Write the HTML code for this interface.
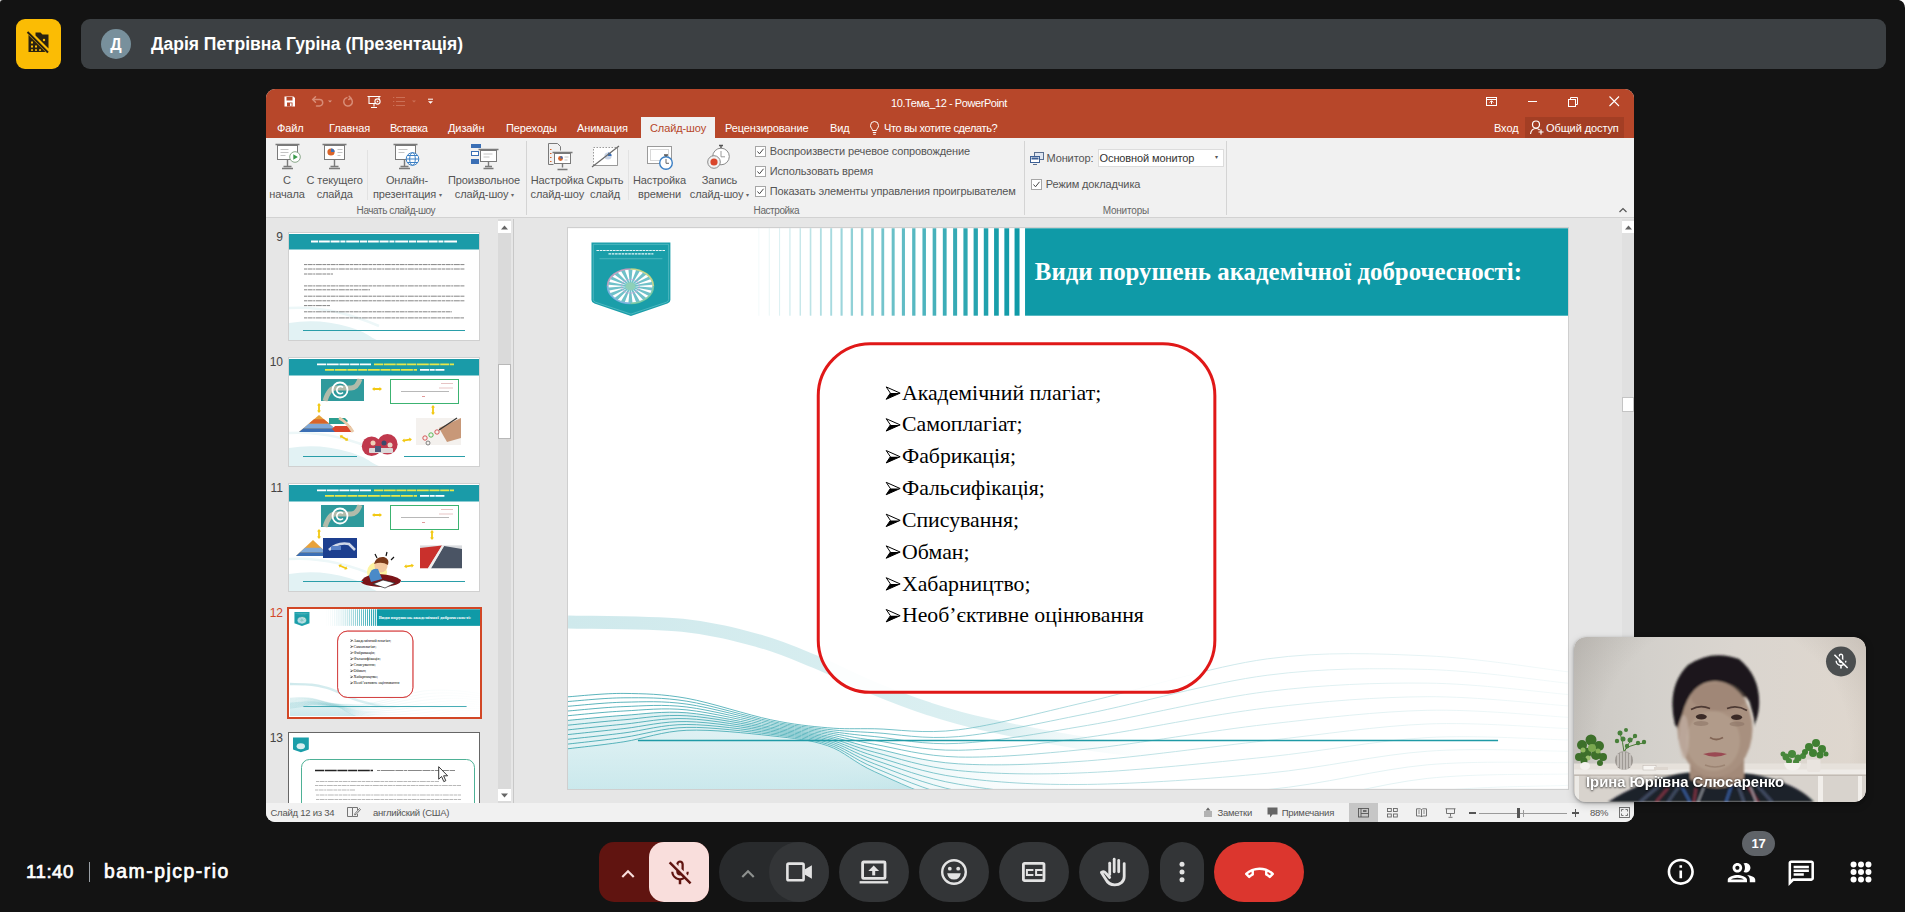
<!DOCTYPE html>
<html>
<head>
<meta charset="utf-8">
<title>Meet</title>
<style>
*{box-sizing:border-box;margin:0;padding:0}
html,body{width:1905px;height:912px;overflow:hidden;background:#131313;font-family:"Liberation Sans",sans-serif;}
body{position:relative}
.abs{position:absolute}
/* ---------- top bar ---------- */
#fx{left:16px;top:19px;width:45px;height:50px;border-radius:9px;background:#fbbc04}
#pbar{left:81px;top:19px;width:1805px;height:50px;border-radius:9px;background:#3c4043}
#av{left:101px;top:29px;width:30px;height:30px;border-radius:50%;background:#78909c;color:#fff;font-size:16px;font-weight:bold;text-align:center;line-height:31px}
#pname{left:151px;top:32px;color:#fff;font-size:17.5px;font-weight:bold;letter-spacing:0px;white-space:nowrap;line-height:24px}
/* ---------- ppt window ---------- */
#ppt{left:266px;top:89px;width:1368px;height:733px;border-radius:9px;background:#e6e6e6;overflow:hidden}
#ptitle{left:0;top:0;width:1368px;height:49px;background:#b7472a}
#ribbon{left:0;top:49px;width:1368px;height:80px;background:#f1f1f1;border-bottom:1px solid #d2d2d2}
#status{left:0;top:714px;width:1368px;height:19px;background:#f1f1f1}
.t{position:absolute;white-space:nowrap;line-height:1}

/* ribbon text */
.tab{position:absolute;top:33px;color:#fff;font-size:11px;line-height:12px;white-space:nowrap;letter-spacing:-0.1px}
.rl{position:absolute;color:#555;font-size:11px;line-height:13px;white-space:nowrap;text-align:center;letter-spacing:-0.12px;transform:translateX(-50%)}
.rx{position:absolute;color:#555;font-size:11px;line-height:13px;white-space:nowrap;letter-spacing:-0.12px}
.gl{position:absolute;top:116px;color:#666;font-size:10px;line-height:12px;white-space:nowrap;letter-spacing:-0.42px}
.vsep{position:absolute;top:3px;width:1px;height:74px;background:#d4d4d4}
.vsep2{position:absolute;top:12px;width:1px;height:50px;background:#e2e2e2}
.cb{position:absolute;width:11px;height:11px;border:1px solid #a6a6a6;background:#fff}
.cb svg{position:absolute;left:0;top:0}
.ric{position:absolute;top:3px;width:32px;height:32px}
/* ---------- bottom bar ---------- */
.btn{position:absolute;top:842px;height:60px;background:#333537;border-radius:30px}
</style>
</head>
<body>
<!-- TOPBAR -->
<svg class="abs" style="left:1899px;top:0" width="6" height="8" viewBox="0 0 6 8"><path d="M0 0H6V8Q5.500 1 0 0Z" fill="#fff"/></svg><svg class="abs" style="left:0;top:0" width="4" height="4" viewBox="0 0 4 4"><path d="M0 0H3Q0 0 0 3Z" fill="#ddd"/></svg>
<div class="abs" id="fx"></div>
<div class="abs" id="pbar"></div>
<div class="abs" id="av">Д</div>
<div class="abs" id="pname">Дарія Петрівна Гуріна (Презентація)</div>


<svg width="0" height="0" style="position:absolute">
 <defs>
  <linearGradient id="gfill" gradientUnits="userSpaceOnUse" x1="0" y1="505" x2="0" y2="561"><stop offset="0" stop-color="#f3fafb"/><stop offset="0.35" stop-color="#def1f3"/><stop offset="1" stop-color="#b3dee4"/></linearGradient><linearGradient id="gfill2" gradientUnits="userSpaceOnUse" x1="250" y1="0" x2="520" y2="0"><stop offset="0" stop-color="#d5edf0" stop-opacity="0.7"/><stop offset="1" stop-color="#e6f4f6" stop-opacity="0"/></linearGradient>
  <linearGradient id="gfade" x1="0" y1="0" x2="1" y2="0"><stop offset="0" stop-color="#fff" stop-opacity="0"/><stop offset="0.55" stop-color="#fff" stop-opacity="0.15"/><stop offset="1" stop-color="#fff" stop-opacity="1"/></linearGradient>
  <linearGradient id="glines" gradientUnits="userSpaceOnUse" x1="0" y1="0" x2="1001" y2="0"><stop offset="0" stop-color="#2f9fa9"/><stop offset="0.3" stop-color="#48adb6"/><stop offset="0.5" stop-color="#9dd3d8"/><stop offset="0.75" stop-color="#d6ecee"/><stop offset="1" stop-color="#f0f8f9"/></linearGradient>
  <linearGradient id="grib" gradientUnits="userSpaceOnUse" x1="0" y1="0" x2="620" y2="0"><stop offset="0" stop-color="#cfe9ec"/><stop offset="0.7" stop-color="#dcf0f2"/><stop offset="1" stop-color="#fff" stop-opacity="0"/></linearGradient>
  <symbol id="slide12" viewBox="0 0 1001 561">
   <rect width="1001" height="561" fill="#fff"/>
   <!-- bottom fill -->
   <path d="M0.0 521.0C9.3 519.8 36.2 517.1 56.0 514.0C75.8 510.9 94.5 503.5 119.0 502.5C143.5 501.5 179.5 505.4 203.0 508.0C226.5 510.6 242.7 512.0 260.0 518.0C277.3 524.0 285.2 534.2 307.0 544.0C328.8 553.8 355.5 567.0 391.0 577.0C426.5 587.0 498.5 599.5 520.0 604.0L520 640L0 640Z" fill="url(#gfill)"/><path d="M0.0 492.4C9.3 491.6 36.2 488.6 56.0 487.4C75.8 486.1 94.5 482.9 119.0 484.9C143.5 486.9 179.5 495.3 203.0 499.2C226.5 503.1 242.7 504.6 260.0 508.1C277.3 511.6 285.2 515.7 307.0 520.4C328.8 525.0 355.5 533.7 391.0 535.8C426.5 537.8 498.5 533.0 520.0 532.5L520 640L0 640Z" fill="url(#gfill2)"/>
   
   <!-- wide light ribbon -->
   <path d="M0.0 394.0C19.1 394.6 82.7 394.2 114.5 397.4C146.3 400.6 168.8 406.9 191.0 413.0C213.2 419.1 228.7 426.2 247.6 434.0C266.5 441.8 285.4 451.9 304.3 459.7C323.2 467.5 342.1 474.9 361.0 481.0C379.9 487.1 391.2 490.8 417.7 496.6C444.2 502.4 486.3 510.8 520.0 516.0C553.7 521.2 603.3 526.0 620.0 528.0" fill="none" stroke="url(#grib)" stroke-width="13"/>
   <g fill="none" stroke="url(#glines)" stroke-width="0.800"><path d="M0.0 469.0C9.3 468.4 36.2 465.4 56.0 465.6C75.8 465.9 94.5 466.1 119.0 470.5C143.5 474.9 179.5 487.1 203.0 492.0C226.5 496.9 242.7 498.5 260.0 500.0C277.3 501.5 285.2 500.7 307.0 501.0C328.8 501.3 355.5 506.5 391.0 502.0C426.5 497.5 468.5 485.8 520.0 474.0C571.5 462.2 643.3 438.7 700.0 431.0C756.7 423.3 809.8 425.8 860.0 428.0C910.2 430.2 977.5 441.3 1001.0 444.0"/><path d="M0.0 473.7C9.3 473.1 36.2 470.1 56.0 470.0C75.8 469.9 94.5 469.5 119.0 473.4C143.5 477.3 179.5 488.8 203.0 493.5C226.5 498.2 242.7 499.7 260.0 501.6C277.3 503.5 285.2 503.7 307.0 504.9C328.8 506.1 355.5 512.0 391.0 508.8C426.5 505.6 468.5 496.1 520.0 485.8C571.5 475.6 643.3 454.7 700.0 447.4C756.7 440.0 809.8 440.3 860.0 441.6C910.2 443.0 977.5 453.1 1001.0 455.4"/><path d="M0.0 478.5C9.3 477.8 36.2 474.8 56.0 474.4C75.8 474.0 94.5 472.9 119.0 476.3C143.5 479.7 179.5 490.4 203.0 494.9C226.5 499.4 242.7 501.0 260.0 503.3C277.3 505.6 285.2 506.8 307.0 508.8C328.8 510.9 355.5 517.5 391.0 515.6C426.5 513.8 468.5 506.3 520.0 497.6C571.5 489.0 643.3 470.8 700.0 463.7C756.7 456.7 809.8 454.8 860.0 455.3C910.2 455.8 977.5 464.8 1001.0 466.7"/><path d="M0.0 483.2C9.3 482.5 36.2 479.5 56.0 478.8C75.8 478.1 94.5 476.3 119.0 479.2C143.5 482.2 179.5 492.1 203.0 496.4C226.5 500.6 242.7 502.2 260.0 504.9C277.3 507.6 285.2 509.8 307.0 512.7C328.8 515.7 355.5 523.0 391.0 522.5C426.5 521.9 468.5 516.5 520.0 509.5C571.5 502.4 643.3 486.8 700.0 480.1C756.7 473.3 809.8 469.2 860.0 468.9C910.2 468.6 977.5 476.6 1001.0 478.1"/><path d="M0.0 487.9C9.3 487.1 36.2 484.2 56.0 483.2C75.8 482.2 94.5 479.7 119.0 482.1C143.5 484.6 179.5 493.8 203.0 497.8C226.5 501.9 242.7 503.4 260.0 506.5C277.3 509.7 285.2 512.8 307.0 516.6C328.8 520.4 355.5 528.5 391.0 529.3C426.5 530.0 468.5 526.7 520.0 521.3C571.5 515.8 643.3 502.9 700.0 496.5C756.7 490.0 809.8 483.7 860.0 482.5C910.2 481.4 977.5 488.3 1001.0 489.5"/><path d="M0.0 492.6C9.3 491.8 36.2 488.9 56.0 487.6C75.8 486.3 94.5 483.1 119.0 485.0C143.5 487.0 179.5 495.4 203.0 499.3C226.5 503.1 242.7 504.6 260.0 508.2C277.3 511.7 285.2 515.9 307.0 520.5C328.8 525.2 355.5 534.0 391.0 536.1C426.5 538.2 468.5 537.0 520.0 533.1C571.5 529.2 643.3 519.0 700.0 512.8C756.7 506.7 809.8 498.2 860.0 496.2C910.2 494.2 977.5 500.0 1001.0 500.8"/><path d="M0.0 497.4C9.3 496.5 36.2 493.6 56.0 492.0C75.8 490.4 94.5 486.5 119.0 488.0C143.5 489.4 179.5 497.1 203.0 500.7C226.5 504.4 242.7 505.9 260.0 509.8C277.3 513.8 285.2 518.9 307.0 524.5C328.8 530.0 355.5 539.5 391.0 542.9C426.5 546.3 468.5 547.2 520.0 544.9C571.5 542.6 643.3 535.0 700.0 529.2C756.7 523.3 809.8 512.7 860.0 509.8C910.2 507.0 977.5 511.8 1001.0 512.2"/><path d="M0.0 502.1C9.3 501.1 36.2 498.3 56.0 496.4C75.8 494.5 94.5 489.9 119.0 490.9C143.5 491.8 179.5 498.8 203.0 502.2C226.5 505.6 242.7 507.1 260.0 511.5C277.3 515.8 285.2 522.0 307.0 528.4C328.8 534.7 355.5 545.0 391.0 549.7C426.5 554.5 468.5 557.4 520.0 556.7C571.5 556.0 643.3 551.1 700.0 545.5C756.7 540.0 809.8 527.1 860.0 523.5C910.2 519.8 977.5 523.5 1001.0 523.5"/><path d="M0.0 506.8C9.3 505.8 36.2 503.0 56.0 500.8C75.8 498.6 94.5 493.3 119.0 493.8C143.5 494.2 179.5 500.4 203.0 503.6C226.5 506.9 242.7 508.3 260.0 513.1C277.3 517.9 285.2 525.0 307.0 532.3C328.8 539.5 355.5 550.5 391.0 556.5C426.5 562.6 468.5 567.7 520.0 568.5C571.5 569.4 643.3 567.2 700.0 561.9C756.7 556.7 809.8 541.6 860.0 537.1C910.2 532.6 977.5 535.3 1001.0 534.9"/><path d="M0.0 511.5C9.3 510.5 36.2 507.7 56.0 505.2C75.8 502.7 94.5 496.7 119.0 496.7C143.5 496.7 179.5 502.1 203.0 505.1C226.5 508.1 242.7 509.5 260.0 514.7C277.3 519.9 285.2 528.1 307.0 536.2C328.8 544.3 355.5 556.0 391.0 563.4C426.5 570.7 468.5 577.9 520.0 580.4C571.5 582.8 643.3 583.2 700.0 578.3C756.7 573.3 809.8 556.1 860.0 550.7C910.2 545.4 977.5 547.0 1001.0 546.3"/><path d="M0.0 516.3C9.3 515.2 36.2 512.4 56.0 509.6C75.8 506.8 94.5 500.1 119.0 499.6C143.5 499.1 179.5 503.8 203.0 506.5C226.5 509.3 242.7 510.8 260.0 516.4C277.3 522.0 285.2 531.1 307.0 540.1C328.8 549.1 355.5 561.5 391.0 570.2C426.5 578.9 468.5 588.1 520.0 592.2C571.5 596.3 643.3 599.3 700.0 594.6C756.7 590.0 809.8 570.5 860.0 564.4C910.2 558.2 977.5 558.8 1001.0 557.6"/><path d="M0.0 521.0C9.3 519.8 36.2 517.1 56.0 514.0C75.8 510.9 94.5 503.5 119.0 502.5C143.5 501.5 179.5 505.4 203.0 508.0C226.5 510.6 242.7 512.0 260.0 518.0C277.3 524.0 285.2 534.2 307.0 544.0C328.8 553.8 355.5 567.0 391.0 577.0C426.5 587.0 468.5 598.3 520.0 604.0C571.5 609.7 643.3 615.3 700.0 611.0C756.7 606.7 809.8 585.0 860.0 578.0C910.2 571.0 977.5 570.5 1001.0 569.0"/></g>
   <path d="M70 512.700H931" stroke="#1f9aa6" stroke-width="1.400"/>
   <!-- header -->
   <rect x="447.0" y="0" width="5.0" height="87.500" fill="#0f9aa7" opacity="1.00"/><rect x="436.8" y="0" width="4.8" height="87.500" fill="#0f9aa7" opacity="0.98"/><rect x="426.5" y="0" width="4.7" height="87.500" fill="#0f9aa7" opacity="0.96"/><rect x="416.2" y="0" width="4.5" height="87.500" fill="#0f9aa7" opacity="0.93"/><rect x="406.0" y="0" width="4.3" height="87.500" fill="#0f9aa7" opacity="0.90"/><rect x="395.8" y="0" width="4.2" height="87.500" fill="#0f9aa7" opacity="0.87"/><rect x="385.5" y="0" width="4.0" height="87.500" fill="#0f9aa7" opacity="0.84"/><rect x="375.2" y="0" width="3.8" height="87.500" fill="#0f9aa7" opacity="0.81"/><rect x="365.0" y="0" width="3.6" height="87.500" fill="#0f9aa7" opacity="0.77"/><rect x="354.8" y="0" width="3.5" height="87.500" fill="#0f9aa7" opacity="0.74"/><rect x="344.5" y="0" width="3.3" height="87.500" fill="#0f9aa7" opacity="0.70"/><rect x="334.2" y="0" width="3.1" height="87.500" fill="#0f9aa7" opacity="0.66"/><rect x="324.0" y="0" width="3.0" height="87.500" fill="#0f9aa7" opacity="0.62"/><rect x="313.7" y="0" width="2.8" height="87.500" fill="#0f9aa7" opacity="0.58"/><rect x="303.5" y="0" width="2.6" height="87.500" fill="#0f9aa7" opacity="0.54"/><rect x="293.2" y="0" width="2.4" height="87.500" fill="#0f9aa7" opacity="0.50"/><rect x="283.0" y="0" width="2.3" height="87.500" fill="#0f9aa7" opacity="0.46"/><rect x="272.8" y="0" width="2.1" height="87.500" fill="#0f9aa7" opacity="0.41"/><rect x="262.5" y="0" width="1.9" height="87.500" fill="#0f9aa7" opacity="0.37"/><rect x="252.2" y="0" width="1.8" height="87.500" fill="#0f9aa7" opacity="0.33"/><rect x="242.0" y="0" width="1.6" height="87.500" fill="#0f9aa7" opacity="0.28"/><rect x="231.8" y="0" width="1.4" height="87.500" fill="#0f9aa7" opacity="0.24"/><rect x="221.5" y="0" width="1.3" height="87.500" fill="#0f9aa7" opacity="0.19"/><rect x="211.2" y="0" width="1.1" height="87.500" fill="#0f9aa7" opacity="0.14"/><rect x="201.0" y="0" width="0.9" height="87.500" fill="#0f9aa7" opacity="0.10"/><rect x="190.6" y="0" width="0.9" height="87.500" fill="#0f9aa7" opacity="0.06"/>
   <rect x="457.500" y="0" width="543.500" height="87.500" fill="#0f9aa7"/>
   <text x="467.300" y="51.500" font-family="Liberation Serif" font-weight="bold" font-size="24.900" fill="#fff">Види порушень академічної доброчесності:</text>
   <!-- logo -->
   <g transform="translate(23.500 14.300)">
     <path d="M0 0H79V57.500Q79 60 76 61L39.500 73.500 3 61Q0 60 0 57.500Z" fill="#1a9ea9"/>
     <path d="M1.800 1.800H77.200V57Q77.200 59 75 59.700L39.500 71.600 4 59.700Q1.800 59 1.800 57Z" fill="none" stroke="#6cc6cd" stroke-width="0.600"/>
     <path d="M5 8H74" stroke="#e8f6f7" stroke-width="1.100" stroke-dasharray="2.600 0.700"/><path d="M17 11.300H62" stroke="#e8f6f7" stroke-width="1.100" stroke-dasharray="2.600 0.700"/>
     <path d="M8 16.200H71" stroke="#7fcfd5" stroke-width="0.500"/>
     <ellipse cx="39" cy="43.700" rx="23" ry="17.300" fill="#b7dfe3" opacity="0.550"/>
     <g transform="translate(-23.500 -14.300)"><path d="M66.5 58.0L84.4 56.6L84.4 59.4ZM66.3 59.0L83.7 62.3L82.5 64.9ZM65.6 59.9L80.5 67.5L78.1 69.6ZM64.5 60.6L75.1 71.5L71.8 72.9ZM63.2 61.0L68.1 73.9L64.5 74.4ZM61.8 61.0L60.5 74.4L56.9 73.9ZM60.5 60.6L53.2 72.9L49.9 71.5ZM59.4 59.9L46.9 69.6L44.5 67.5ZM58.7 59.0L42.5 64.9L41.3 62.3ZM58.5 58.0L40.6 59.4L40.6 56.6ZM58.7 57.0L41.3 53.7L42.5 51.1ZM59.4 56.1L44.5 48.5L46.9 46.4ZM60.5 55.4L49.9 44.5L53.2 43.1ZM61.8 55.0L56.9 42.1L60.5 41.6ZM63.2 55.0L64.5 41.6L68.1 42.1ZM64.5 55.4L71.8 43.1L75.1 44.5ZM65.6 56.1L78.1 46.4L80.5 48.5ZM66.3 57.0L82.5 51.1L83.7 53.7Z" fill="#fff"/></g>
     <ellipse cx="39" cy="43.700" rx="5" ry="4" fill="#8ed0b8"/>
     <g fill="none" stroke-width="1.600" opacity="0.750"><path d="M16 43.700A23 17.300 0 0 1 39 26.400" stroke="#e79ac0"/><path d="M39 26.400A23 17.300 0 0 1 62 43.700" stroke="#f0e27a"/><path d="M62 43.700A23 17.300 0 0 1 39 61" stroke="#8fd4a0"/><path d="M39 61A23 17.300 0 0 1 16 43.700" stroke="#8fb4ec"/></g><ellipse cx="39" cy="43.700" rx="9" ry="7" fill="none" stroke="#c9a0d8" stroke-width="1.200" opacity="0.500"/>
   </g>
   <!-- red box -->
   <rect x="250.500" y="115.500" width="397" height="349" rx="52" ry="52" fill="#fff" fill-opacity="0.920" stroke="#e01818" stroke-width="3"/>
   <g font-family="Liberation Serif" font-size="21.800" fill="#000"><g transform="translate(318.500 158.8)"><path d="M0 0L14 6.200 0 12.400 4.200 6.200Z" fill="#fff" stroke="#000" stroke-width="1" stroke-linejoin="miter"/><path d="M4.200 6.200H14L0 12.400Z" fill="#000"/></g><text x="334.300" y="171.6">Академічний плагіат;</text><g transform="translate(318.500 190.6)"><path d="M0 0L14 6.200 0 12.400 4.200 6.200Z" fill="#fff" stroke="#000" stroke-width="1" stroke-linejoin="miter"/><path d="M4.200 6.200H14L0 12.400Z" fill="#000"/></g><text x="334.300" y="203.4">Самоплагіат;</text><g transform="translate(318.500 222.5)"><path d="M0 0L14 6.200 0 12.400 4.200 6.200Z" fill="#fff" stroke="#000" stroke-width="1" stroke-linejoin="miter"/><path d="M4.200 6.200H14L0 12.400Z" fill="#000"/></g><text x="334.300" y="235.3">Фабрикація;</text><g transform="translate(318.500 254.3)"><path d="M0 0L14 6.200 0 12.400 4.200 6.200Z" fill="#fff" stroke="#000" stroke-width="1" stroke-linejoin="miter"/><path d="M4.200 6.200H14L0 12.400Z" fill="#000"/></g><text x="334.300" y="267.1">Фальсифікація;</text><g transform="translate(318.500 286.2)"><path d="M0 0L14 6.200 0 12.400 4.200 6.200Z" fill="#fff" stroke="#000" stroke-width="1" stroke-linejoin="miter"/><path d="M4.200 6.200H14L0 12.400Z" fill="#000"/></g><text x="334.300" y="299">Списування;</text><g transform="translate(318.500 317.9)"><path d="M0 0L14 6.200 0 12.400 4.200 6.200Z" fill="#fff" stroke="#000" stroke-width="1" stroke-linejoin="miter"/><path d="M4.200 6.200H14L0 12.400Z" fill="#000"/></g><text x="334.300" y="330.7">Обман;</text><g transform="translate(318.500 349.8)"><path d="M0 0L14 6.200 0 12.400 4.200 6.200Z" fill="#fff" stroke="#000" stroke-width="1" stroke-linejoin="miter"/><path d="M4.200 6.200H14L0 12.400Z" fill="#000"/></g><text x="334.300" y="362.6">Хабарництво;</text><g transform="translate(318.500 381.6)"><path d="M0 0L14 6.200 0 12.400 4.200 6.200Z" fill="#fff" stroke="#000" stroke-width="1" stroke-linejoin="miter"/><path d="M4.200 6.200H14L0 12.400Z" fill="#000"/></g><text x="334.300" y="394.4">Необ’єктивне оцінювання</text></g>
  </symbol>
 </defs>
</svg>

<!-- PPT -->
<div class="abs" id="ppt">
  <div class="abs" id="ptitle">
    <!-- quick access -->
    <svg class="abs" style="left:14px;top:4px" width="160" height="18" viewBox="0 0 160 18">
      <g fill="none" stroke="#fff" stroke-width="1.2">
        <path d="M4.5 3.5h9l1.5 1.5v8.5h-10.5z" fill="#fff" stroke="none"/>
        <rect x="6.5" y="4" width="6" height="3.5" fill="#b7472a" stroke="none"/>
        <rect x="7" y="9.5" width="5.5" height="4" fill="#b7472a" stroke="none"/>
        <rect x="10" y="10.3" width="1.6" height="2.6" fill="#fff" stroke="none"/>
      </g>
      <g fill="none" stroke="#d88c76" stroke-width="1.5" stroke-linecap="round">
        <path d="M33 6.5h6.5a3.2 3.2 0 0 1 0 6.4h-3"/><path d="M35.5 3.8l-2.7 2.7 2.7 2.7"/>
        <path d="M70.5 5.2a4.3 4.3 0 1 1-3.6-0.6"/><path d="M69.2 3.2l1.8 2-2.3 1.3" />
      </g>
      <path d="M48 7.5h4l-2 2z" fill="#d99a88"/>
      <g fill="none" stroke="#fff" stroke-width="1.1">
        <path d="M87.5 3.5h13M89 3.5v7h10v-7M94 10.5v3M91 14.5h6"/>
        <circle cx="97.5" cy="8.5" r="2.6" fill="#b7472a"/><path d="M96.8 7.2l1.8 1.3-1.8 1.3z" fill="#fff" stroke="none"/>
      </g>
      <g stroke="#cb6f56" stroke-width="1.2">
        <path d="M116 4.5h9M116 8.5h9M116 12.5h9"/>
        <path d="M113 4.5h1.3M113 8.5h1.3M113 12.5h1.3"/>
      </g>
      <path d="M132 7.5h4l-2 2z" fill="#cb6f56"/>
      <path d="M148 6.2h5" stroke="#fff" stroke-width="1"/><path d="M148 8.2h5l-2.5 2.6z" fill="#fff"/>
    </svg>
    <div class="t" style="left:625px;top:8px;color:#fff;font-size:11px;letter-spacing:-0.42px;line-height:12px">10.Тема_12 - PowerPoint</div>
    <!-- window controls -->
    <svg class="abs" style="left:1215px;top:4px" width="150" height="18" viewBox="0 0 150 18" fill="none" stroke="#fff" stroke-width="1">
      <rect x="5.5" y="4.5" width="10" height="8"/><path d="M5.5 6.5h10M10.5 11V8M8.7 9.5l1.8-1.8 1.8 1.8"/>
      <path d="M47 8.5h9"/>
      <rect x="87.500" y="6.500" width="7" height="7"/><path d="M89.500 6.500v-2h7v7h-2"/>
      <path d="M128.5 3.500l9.500 9.500M138 3.500l-9.500 9.500" stroke-width="1.100"/>
    </svg>
    <!-- tabs -->
    <div class="tab" style="left:11px">Файл</div>
    <div class="tab" style="left:63px">Главная</div>
    <div class="tab" style="left:124px;letter-spacing:-0.5px">Вставка</div>
    <div class="tab" style="left:182px">Дизайн</div>
    <div class="tab" style="left:240px">Переходы</div>
    <div class="tab" style="left:311px">Анимация</div>
    <div class="abs" style="left:375px;top:28px;width:74px;height:22px;background:#f1f1f1"></div>
    <div class="tab" style="left:384px;color:#b7472a">Слайд-шоу</div>
    <div class="tab" style="left:459px">Рецензирование</div>
    <div class="tab" style="left:564px">Вид</div>
    <svg class="abs" style="left:603px;top:31px" width="11" height="16" viewBox="0 0 11 16" fill="none" stroke="#fff" stroke-width="1"><path d="M3.500 10.500c0-1.800-2-2.500-2-5a4 4 0 0 1 8 0c0 2.500-2 3.200-2 5zM3.800 12.500h3.400M4.200 14.300h2.600"/></svg>
    <div class="tab" style="left:618px;letter-spacing:-0.38px">Что вы хотите сделать?</div>
    <div class="tab" style="left:1228px">Вход</div>
    <div class="abs" style="left:1259px;top:28px;width:99px;height:21px;background:#a33e24"></div>
    <svg class="abs" style="left:1263px;top:30px" width="16" height="17" viewBox="0 0 16 17" fill="none" stroke="#fff" stroke-width="1.200"><circle cx="7" cy="5.500" r="3.500"/><path d="M1.500 15c0.500-3.500 2.500-5.500 5.500-5.500 1.500 0 2.800 0.600 3.600 1.500"/><path d="M12 10.500v5M9.500 13h5"/></svg>
    <div class="tab" style="left:1280px">Общий доступ</div>
  </div>
  <div class="abs" id="ribbon">
    <svg class="ric" style="left:5.5px" viewBox="0 0 32 32" fill="none" stroke="#7a7a7a" stroke-width="1"><path d="M3.500 3.500h24" stroke-width="1.400"/><rect x="5.500" y="4.500" width="20" height="14" fill="#fff"/><path d="M8.500 8.500h8M8.500 11.500h8M8.500 14.500h5" stroke="#c4c4c4"/><path d="M15.500 18.500v7M10 27.500h11M11.500 25.500h8" stroke-width="1.400"/><circle cx="23" cy="16" r="5.300" fill="#fff" stroke="#8aa88a"/><path d="M21.300 13.200l4.500 2.800-4.500 2.800z" fill="#3a9a4a" stroke="none"/></svg>
    <div class="rl" style="left:21px;top:36px">С</div>
    <div class="rl" style="left:21px;top:50px">начала</div>
    <svg class="ric" style="left:52.7px" viewBox="0 0 32 32" fill="none" stroke="#7a7a7a" stroke-width="1"><path d="M3.500 3.500h24" stroke-width="1.400"/><rect x="5.500" y="4.500" width="20" height="14" fill="#fff"/><circle cx="12" cy="11" r="3.600" fill="#d9642a" stroke="none"/><path d="M12 11V7.400a3.600 3.600 0 0 1 3.600 3.600z" fill="#3b6fb5" stroke="none"/><path d="M18.500 8.500h5M18.500 11.500h5M18.500 14.500h3" stroke="#c4c4c4"/><path d="M15.500 18.500v7M10 27.500h11M11.500 25.500h8" stroke-width="1.400"/></svg>
    <div class="rl" style="left:68.7px;top:36px">С текущего</div>
    <div class="rl" style="left:68.7px;top:50px">слайда</div>
    <div class="vsep2" style="left:101px"></div>
    <svg class="ric" style="left:124px" viewBox="0 0 32 32" fill="none" stroke="#7a7a7a" stroke-width="1"><path d="M3.500 3.500h24" stroke-width="1.400"/><rect x="5.500" y="4.500" width="20" height="14" fill="#fff"/><path d="M8.500 8.500h9M8.500 11.500h6" stroke="#c4c4c4"/><path d="M14.500 18.500v7M9 27.500h11M10.500 25.500h8" stroke-width="1.400"/><circle cx="22.500" cy="18" r="6.300" fill="#fff" stroke="#3b7fc4"/><ellipse cx="22.500" cy="18" rx="2.800" ry="6.300" stroke="#3b7fc4"/><path d="M16.300 18h12.400M17.200 14.500h10.600M17.200 21.500h10.600" stroke="#3b7fc4"/></svg>
    <div class="rl" style="left:141px;top:36px">Онлайн-</div>
    <div class="rl" style="left:141.5px;top:50px">презентация <span style="font-size:6px;position:relative;top:-1px;color:#666">&#9662;</span></div>
    <svg class="ric" style="left:202px" viewBox="0 0 32 32" fill="none" stroke="#7a7a7a" stroke-width="1"><rect x="3.500" y="3.500" width="9" height="3" fill="#3b6fb5" stroke="#3b6fb5"/><rect x="3.500" y="10.500" width="7" height="4" fill="#fff" stroke="#3b6fb5"/><rect x="3.500" y="18.500" width="7" height="4" fill="#3b6fb5" stroke="#3b6fb5"/><path d="M10.500 8.500h20" stroke-width="1.400"/><rect x="12.500" y="9.500" width="16" height="11" fill="#fff"/><path d="M15.500 13h9M15.500 16h6" stroke="#c4c4c4"/><path d="M20.500 20.500v5M15.500 27.500h10M17 25.500h7" stroke-width="1.400"/></svg>
    <div class="rl" style="left:218px;top:36px">Произвольное</div>
    <div class="rl" style="left:218.5px;top:50px">слайд-шоу <span style="font-size:6px;position:relative;top:-1px;color:#666">&#9662;</span></div>
    <div class="vsep" style="left:260px"></div>
    <svg class="ric" style="left:276px" viewBox="0 0 32 32" fill="none" stroke="#7a7a7a" stroke-width="1"><path d="M6.500 2.500h9l3 3v4M6.500 2.500v21h5" fill="none"/><path d="M8 8.500h1.500M8 12.500h1.500M8 16.500h1.500M8 20.500h1.500" stroke="#d9642a"/><path d="M10.500 11.500h20" stroke-width="1.400"/><rect x="12.500" y="12.500" width="16" height="10" fill="#fff"/><circle cx="18.500" cy="17.500" r="2.400" fill="#d9642a" stroke="none"/><path d="M18.500 17.500v-2.400a2.400 2.400 0 0 1 2.400 2.400z" fill="#3b6fb5" stroke="none"/><path d="M22.500 16h4M22.500 19h3" stroke="#c4c4c4"/><path d="M20.500 22.500v4M15.500 28.500h10" stroke-width="1.400"/></svg>
    <div class="rl" style="left:291.3px;top:36px">Настройка</div>
    <div class="rl" style="left:291.3px;top:50px">слайд-шоу</div>
    <svg class="ric" style="left:323px" viewBox="0 0 32 32" fill="none" stroke="#7a7a7a" stroke-width="1"><rect x="4.500" y="6.500" width="24" height="18" fill="#fff" stroke="#9a9a9a" stroke-dasharray="1.500 1.500"/><path d="M4.500 24.500h24v-18" stroke="#9a9a9a"/><circle cx="19" cy="15" r="3.600" fill="#c9d4e6" stroke="none"/><path d="M19 15v-3.600a3.600 3.600 0 0 1 3.600 3.600z" fill="#3b6fb5" stroke="none"/><path d="M3 26l27-21" stroke="#6a6a6a" stroke-width="1.200"/></svg>
    <div class="rl" style="left:339px;top:36px">Скрыть</div>
    <div class="rl" style="left:339px;top:50px">слайд</div>
    <div class="vsep2" style="left:362px"></div>
    <svg class="ric" style="left:378px" viewBox="0 0 32 32" fill="none" stroke="#7a7a7a" stroke-width="1"><rect x="3.500" y="5.500" width="24" height="17" fill="#fff" stroke="#9a9a9a"/><rect x="6.500" y="8.500" width="18" height="11" stroke="#d8d8d8"/><circle cx="22" cy="22" r="6.300" fill="#fff" stroke="#3b7fc4" stroke-width="1.400"/><path d="M22 18v4.300h3" stroke="#666"/><path d="M20 14h4M22 14v1.600" stroke="#555" stroke-width="1.400"/></svg>
    <div class="rl" style="left:393.5px;top:36px">Настройка</div>
    <div class="rl" style="left:393.5px;top:50px">времени</div>
    <svg class="ric" style="left:436px" viewBox="0 0 32 32" fill="none" stroke="#7a7a7a" stroke-width="1"><circle cx="19" cy="15.500" r="8.300" fill="#fff" stroke="#8a8a8a"/><path d="M19 10v5.800h4" stroke="#9a9a9a"/><path d="M17 4.500h4M19 4.500v2.500" stroke="#555" stroke-width="1.400"/><circle cx="12" cy="21" r="6.300" fill="#f1f1f1" stroke="#8a8a8a"/><circle cx="12" cy="21" r="3.600" fill="#d9452a" stroke="none"/></svg>
    <div class="rl" style="left:453.5px;top:36px">Запись</div>
    <div class="rl" style="left:453.5px;top:50px">слайд-шоу <span style="font-size:6px;position:relative;top:-1px;color:#666">&#9662;</span></div>
    <div class="gl" style="left:90.6px;top:67px">Начать слайд-шоу</div>
    <div class="cb" style="left:488.5px;top:7.5px"><svg width="9" height="9" viewBox="0 0 9 9" fill="none" stroke="#444" stroke-width="1"><path d="M1.500 4.500l2 2.300 4-5"/></svg></div>
    <div class="rx" style="left:503.7px;top:6.5px">Воспроизвести речевое сопровождение</div>
    <div class="cb" style="left:488.5px;top:27.5px"><svg width="9" height="9" viewBox="0 0 9 9" fill="none" stroke="#444" stroke-width="1"><path d="M1.500 4.500l2 2.300 4-5"/></svg></div>
    <div class="rx" style="left:503.7px;top:26.5px">Использовать время</div>
    <div class="cb" style="left:488.5px;top:47.5px"><svg width="9" height="9" viewBox="0 0 9 9" fill="none" stroke="#444" stroke-width="1"><path d="M1.500 4.500l2 2.300 4-5"/></svg></div>
    <div class="rx" style="left:503.7px;top:46.5px">Показать элементы управления проигрывателем</div>
    <div class="gl" style="left:487.6px;top:67px">Настройка</div>
    <div class="vsep" style="left:758px"></div>
    <svg class="abs" style="left:764px;top:13px" width="14" height="14" viewBox="0 0 14 14" fill="none" stroke="#5a6f8f" stroke-width="1"><rect x="4.500" y="1.500" width="9" height="7" fill="#dfe6f1"/><rect x="0.500" y="5.500" width="9" height="6" fill="#fff" stroke="#3b5f95"/><rect x="1.500" y="6.500" width="7" height="2" fill="#3b5f95" stroke="none"/><path d="M3 13.500h4"/></svg>
    <div class="rx" style="left:780.5px;top:13.5px">Монитор:</div>
    <div class="abs" style="left:831.5px;top:10.8px;width:126px;height:18.500px;background:#fff;border:1px solid #dcdcdc"></div>
    <div class="rx" style="left:833.6px;top:13.5px;color:#333">Основной монитор</div>
    <div class="rx" style="left:949px;top:13px;font-size:6px;color:#555">&#9662;</div>
    <div class="cb" style="left:764.5px;top:41px"><svg width="9" height="9" viewBox="0 0 9 9" fill="none" stroke="#444" stroke-width="1"><path d="M1.500 4.500l2 2.300 4-5"/></svg></div>
    <div class="rx" style="left:779.8px;top:40px">Режим докладчика</div>
    <div class="gl" style="left:836.7px;top:67px;letter-spacing:-0.2px">Мониторы</div>
    <div class="vsep" style="left:960px"></div>
    <svg class="abs" style="left:1352px;top:68px" width="10" height="8" viewBox="0 0 10 8" fill="none" stroke="#555" stroke-width="1.200"><path d="M1.500 6l3.500-3.500 3.500 3.500"/></svg>
  </div>
  <!-- PANEL -->
  <div class="abs" style="left:0;top:129px;width:247px;height:585px;background:#e6e6e6"></div>
  <div class="abs" style="left:247px;top:130px;width:1px;height:584px;background:#c8c8c8"></div>
  <div class="abs" style="left:231.5px;top:130px;width:13px;height:584px;background:#dadada"></div>
  <div class="abs" style="left:231.5px;top:132px;width:13px;height:12px;background:#fff"></div>
  <svg class="abs" style="left:234.5px;top:135.5px" width="7" height="5" viewBox="0 0 7 5"><path d="M0 4.500L3.500 0.500 7 4.500Z" fill="#666"/></svg>
  <div class="abs" style="left:231.5px;top:699.5px;width:13px;height:12px;background:#fff"></div>
  <svg class="abs" style="left:234.5px;top:703.5px" width="7" height="5" viewBox="0 0 7 5"><path d="M0 0.500L3.500 4.500 7 0.500Z" fill="#666"/></svg>
  <div class="abs" style="left:231.5px;top:274.5px;width:13px;height:75.500px;background:#fff;border:1px solid #b8b8b8"></div>
  <div class="t" style="right:1351px;top:142px;color:#444;font-size:12px;line-height:13px">9</div>
  <div class="t" style="right:1351px;top:267px;color:#444;font-size:12px;line-height:13px">10</div>
  <div class="t" style="right:1351px;top:392.5px;color:#444;font-size:12px;line-height:13px">11</div>
  <div class="t" style="right:1351px;top:517.5px;color:#d24726;font-size:12px;line-height:13px">12</div>
  <div class="t" style="right:1351px;top:642.5px;color:#444;font-size:12px;line-height:13px">13</div>
  <svg class="abs" style="left:23px;top:144px;box-shadow:0 0 0 1px #d0d0d0" width="190" height="107" viewBox="0 0 190 107"><rect width="190" height="107" fill="#fff"/><path d="M0 90C20 87 40 88 60 94S80 104 90 108H0Z" fill="#e2f2f4"/><path d="M0 75C30 73 60 80 90 93" fill="none" stroke="#edf7f8" stroke-width="2.500"/>
<rect x="0" y="1" width="190" height="15.500" fill="#1a9ba8"/><path d="M22 8.500H168" stroke="#fff" stroke-width="2.200" stroke-dasharray="7 0.800 11 0.800 9 0.800 5 0.800 13 0.800"/>
<path d="M15 31.6H176" stroke="#777" stroke-width="0.9" stroke-dasharray="3 0.600 5 0.600 2 0.600 6 0.600 4 0.600"/><path d="M15 36H176" stroke="#777" stroke-width="0.9" stroke-dasharray="3 0.600 5 0.600 2 0.600 6 0.600 4 0.600"/><path d="M15 41H44" stroke="#777" stroke-width="0.9" stroke-dasharray="3 0.600 5 0.600 2 0.600 6 0.600 4 0.600"/><path d="M15 52.9H176" stroke="#777" stroke-width="0.9" stroke-dasharray="3 0.600 5 0.600 2 0.600 6 0.600 4 0.600"/><path d="M15 56.8H81" stroke="#777" stroke-width="0.9" stroke-dasharray="3 0.600 5 0.600 2 0.600 6 0.600 4 0.600"/><path d="M15 63.2H176" stroke="#777" stroke-width="0.9" stroke-dasharray="3 0.600 5 0.600 2 0.600 6 0.600 4 0.600"/><path d="M15 67.8H176" stroke="#777" stroke-width="0.9" stroke-dasharray="3 0.600 5 0.600 2 0.600 6 0.600 4 0.600"/><path d="M15 72.6H41" stroke="#777" stroke-width="0.9" stroke-dasharray="3 0.600 5 0.600 2 0.600 6 0.600 4 0.600"/><path d="M15 78.8H163" stroke="#777" stroke-width="0.9" stroke-dasharray="3 0.600 5 0.600 2 0.600 6 0.600 4 0.600"/><path d="M15 84.9H175" stroke="#777" stroke-width="0.9" stroke-dasharray="3 0.600 5 0.600 2 0.600 6 0.600 4 0.600"/>
<path d="M14 97.500H176" stroke="#2a9ea9" stroke-width="1"/></svg>
  <svg class="abs" style="left:23px;top:269px;box-shadow:0 0 0 1px #d0d0d0" width="190" height="108" viewBox="0 0 190 108"><rect width="190" height="108" fill="#fff"/><path d="M0 90C20 87 40 88 60 94S80 104 90 108H0Z" fill="#e2f2f4"/><path d="M0 75C30 73 60 80 90 93" fill="none" stroke="#edf7f8" stroke-width="2.500"/><rect x="0" y="1" width="190" height="16.500" fill="#1a9ba8"/><path d="M28 6.300H82" stroke="#fff" stroke-width="1.800" stroke-dasharray="9 0.700 12 0.700 10 0.700"/><path d="M85 6.300H165" stroke="#e8e84a" stroke-width="1.800" stroke-dasharray="9 0.700 12 0.700 10 0.700"/><path d="M36 11.800H128" stroke="#e8e84a" stroke-width="1.800" stroke-dasharray="9 0.700 12 0.700 10 0.700"/><path d="M131 11.800H156" stroke="#fff" stroke-width="1.800" stroke-dasharray="9 0.700 5 0.700"/><rect x="32" y="21" width="43" height="22" fill="#2f9a9c"/><path d="M36 43Q40 30 46 30H62Q68 30 71 21" fill="none" stroke="#e8c9b0" stroke-width="5" opacity="0.700"/><circle cx="51" cy="32" r="7.500" fill="none" stroke="#fff" stroke-width="1.800"/><path d="M54 29.500A3.600 3.600 0 1 0 54 34.500" fill="none" stroke="#fff" stroke-width="1.600"/><rect x="101.500" y="21.500" width="68" height="24" fill="#fff" stroke="#3cb371" stroke-width="1"/><path d="M112 33.500H160" stroke="#888" stroke-width="0.600"/><path d="M152 25.500H164M150 30H164" stroke="#c88" stroke-width="0.500"/><path d="M133 38.500h3" stroke="#c55" stroke-width="0.600"/><path d="M10 74L30 57 50 74Z" fill="#e8a23a"/><path d="M10 74L14.500 70.200H45.500L50 74Z" fill="#3b6fb5"/><path d="M14.500 70.200L20 65.500H40L45.500 70.200Z" fill="#7fa8d8"/><path d="M20 65.500L25 61.300H35L40 65.500Z" fill="#d9642a"/>
<path d="M40 60h16l3 3-3 3H40z" fill="#2a9d8f"/><path d="M62 68H46l-3 3 3 3h16z" fill="#d9452a"/><path d="M50 60q8 4 14 14" stroke="#e9c9a8" stroke-width="3" fill="none"/>
<circle cx="82.600" cy="88.200" r="9.800" fill="#c0394d"/><circle cx="98.400" cy="86.200" r="10.200" fill="#c0394d"/><circle cx="84" cy="85" r="2.500" fill="#f0d0b8"/><circle cx="95" cy="85" r="2.500" fill="#3b4a6b"/><circle cx="101" cy="87" r="2.500" fill="#e8d8c8"/><rect x="80" y="90" width="24" height="5" rx="1" fill="#dcd8d8"/><rect x="86" y="88" width="6" height="6" fill="#4a5a7b"/>
<rect x="127" y="60" width="45" height="27" fill="#f4f1ee"/><path d="M150 70L172 60V80L158 84Z" fill="#c89878"/><path d="M150 72L168 60" stroke="#333" stroke-width="1.200"/><circle cx="136" cy="80" r="2.200" fill="none" stroke="#c33" stroke-width="0.800"/><circle cx="142" cy="77" r="2.200" fill="none" stroke="#3a3" stroke-width="0.800"/><circle cx="148" cy="74" r="2.200" fill="none" stroke="#c33" stroke-width="0.800"/><circle cx="139" cy="85" r="2" fill="none" stroke="#555" stroke-width="0.700"/>
<g transform="translate(88 31) rotate(0)"><path d="M-5 0L-2.500 -2V-0.900H2.500V-2L5 0 2.500 2V0.900H-2.500V2Z" fill="#f2c811"/></g><g transform="translate(30 50) rotate(90)"><path d="M-5 0L-2.500 -2V-0.900H2.500V-2L5 0 2.500 2V0.900H-2.500V2Z" fill="#f2c811"/></g><g transform="translate(144 52) rotate(90)"><path d="M-5 0L-2.500 -2V-0.900H2.500V-2L5 0 2.500 2V0.900H-2.500V2Z" fill="#f2c811"/></g><g transform="translate(55 80) rotate(30)"><path d="M-5 0L-2.500 -2V-0.900H2.500V-2L5 0 2.500 2V0.900H-2.500V2Z" fill="#f2c811"/></g><g transform="translate(118 82) rotate(-10)"><path d="M-5 0L-2.500 -2V-0.900H2.500V-2L5 0 2.500 2V0.900H-2.500V2Z" fill="#f2c811"/></g>
<path d="M14 98.500H68M115 98.500H176" stroke="#2a9ea9" stroke-width="1"/></svg>
  <svg class="abs" style="left:23px;top:395px;box-shadow:0 0 0 1px #d0d0d0" width="190" height="107" viewBox="0 0 190 107"><rect width="190" height="107" fill="#fff"/><path d="M0 90C20 87 40 88 60 94S80 104 90 108H0Z" fill="#e2f2f4"/><path d="M0 75C30 73 60 80 90 93" fill="none" stroke="#edf7f8" stroke-width="2.500"/><rect x="0" y="1" width="190" height="16.500" fill="#1a9ba8"/><path d="M28 6.300H82" stroke="#fff" stroke-width="1.800" stroke-dasharray="9 0.700 12 0.700 10 0.700"/><path d="M85 6.300H165" stroke="#e8e84a" stroke-width="1.800" stroke-dasharray="9 0.700 12 0.700 10 0.700"/><path d="M36 11.800H128" stroke="#e8e84a" stroke-width="1.800" stroke-dasharray="9 0.700 12 0.700 10 0.700"/><path d="M131 11.800H156" stroke="#fff" stroke-width="1.800" stroke-dasharray="9 0.700 5 0.700"/><rect x="32" y="21" width="43" height="22" fill="#2f9a9c"/><path d="M36 43Q40 30 46 30H62Q68 30 71 21" fill="none" stroke="#e8c9b0" stroke-width="5" opacity="0.700"/><circle cx="51" cy="32" r="7.500" fill="none" stroke="#fff" stroke-width="1.800"/><path d="M54 29.500A3.600 3.600 0 1 0 54 34.500" fill="none" stroke="#fff" stroke-width="1.600"/><rect x="101.500" y="21.500" width="68" height="24" fill="#fff" stroke="#3cb371" stroke-width="1"/><path d="M112 33.500H160" stroke="#888" stroke-width="0.600"/><path d="M152 25.500H164M150 30H164" stroke="#c88" stroke-width="0.500"/><path d="M133 38.500h3" stroke="#c55" stroke-width="0.600"/>
<path d="M7 72L24 56 41 72Z" fill="#e8a23a"/><path d="M7 72L11 68.300H37L41 72Z" fill="#3b6fb5"/><path d="M11 68.300L16 63.700H32L37 68.300Z" fill="#7fa8d8"/>
<rect x="34" y="54" width="34" height="20" fill="#1d3f8f"/><path d="M40 66q8-8 20-6l6 6" stroke="#d0d8e8" stroke-width="2.500" fill="none"/><rect x="42" y="62" width="10" height="4" fill="#5a82c8"/>
<circle cx="88" cy="88" r="10" fill="#fdf3a0"/><path d="M72 98q2-7 18-8 16 1 22 6 0 6-20 7-18-1-20-5z" fill="#7a1418"/><circle cx="92" cy="82" r="6.500" fill="#f3c9a0"/><path d="M85 80q2-8 10-7 6 2 4 8-6-4-14-1z" fill="#7a3a1a"/><path d="M80 92q2-9 9-7l4 10-11 3z" fill="#4a8ac8"/><path d="M84 100l10-4 12 3-10 5z" fill="#fff" stroke="#222" stroke-width="0.700"/><path d="M88 74l-2-4M97 72l1-4M102 76l3-3" stroke="#111" stroke-width="1.200"/>
<rect x="131" y="61.400" width="42" height="22.800" fill="#d9dbde"/><path d="M131 64l22-2.600L139 84.200H131Z" fill="#c9302c"/><path d="M155 62l18 3v19.200H142Z" fill="#4a5464"/><path d="M153 61.400L139 84.200h3L155 62Z" fill="#eee"/>
<g transform="translate(88 31) rotate(0)"><path d="M-5 0L-2.500 -2V-0.900H2.500V-2L5 0 2.500 2V0.900H-2.500V2Z" fill="#f2c811"/></g><g transform="translate(30 50) rotate(90)"><path d="M-5 0L-2.500 -2V-0.900H2.500V-2L5 0 2.500 2V0.900H-2.500V2Z" fill="#f2c811"/></g><g transform="translate(143 51) rotate(90)"><path d="M-5 0L-2.500 -2V-0.900H2.500V-2L5 0 2.500 2V0.900H-2.500V2Z" fill="#f2c811"/></g><g transform="translate(54 83) rotate(25)"><path d="M-5 0L-2.500 -2V-0.900H2.500V-2L5 0 2.500 2V0.900H-2.500V2Z" fill="#f2c811"/></g><g transform="translate(120 82) rotate(-8)"><path d="M-5 0L-2.500 -2V-0.900H2.500V-2L5 0 2.500 2V0.900H-2.500V2Z" fill="#f2c811"/></g>
<path d="M14 97.500H74M112 97.500H176" stroke="#2a9ea9" stroke-width="1"/></svg>
  <div class="abs" style="left:21px;top:517.5px;width:195px;height:112px;border:2px solid #d24726;background:#fff"></div>
  <svg class="abs" style="left:23.5px;top:520px" width="190" height="107" preserveAspectRatio="none"><use href="#slide12"/><path d="M13.500 97.500H176.500" stroke="#3aa6b0" stroke-width="0.900"/><rect x="47.600" y="22" width="75.400" height="66.500" rx="10" fill="none" stroke="#cc3333" stroke-width="0.800"/></svg>
  <svg class="abs" style="left:23px;top:644px;box-shadow:0 0 0 1px #666" width="190" height="72" viewBox="0 0 190 72"><rect width="190" height="72" fill="#fff"/><g transform="translate(4 4.500) scale(0.200)"><path d="M0 0H79V57.500Q79 60 76 61L39.500 73.500 3 61Q0 60 0 57.500Z" fill="#1a9ea9"/><ellipse cx="39" cy="43.700" rx="21" ry="15" fill="#d8eef0"/></g>
<rect x="12.500" y="26.500" width="173" height="60" rx="8" fill="#fff" stroke="#3aa88a" stroke-width="0.900"/>
<path d="M26 37.500H84" stroke="#222" stroke-width="1.700" stroke-dasharray="9 0.700 12 0.700 10 0.700"/><path d="M88 37.500H166" stroke="#888" stroke-width="1" stroke-dasharray="3 0.700 14 0.700 8 0.700"/>
<path d="M27 48.5H150" stroke="#9a9a9a" stroke-width="0.7" stroke-dasharray="3 0.600 5 0.600 2 0.600 6 0.600 4 0.600"/><path d="M26 52.5H172" stroke="#9a9a9a" stroke-width="0.7" stroke-dasharray="3 0.600 5 0.600 2 0.600 6 0.600 4 0.600"/><path d="M26 57H66" stroke="#9a9a9a" stroke-width="0.7" stroke-dasharray="3 0.600 5 0.600 2 0.600 6 0.600 4 0.600"/><path d="M27 62H172" stroke="#9a9a9a" stroke-width="0.7" stroke-dasharray="3 0.600 5 0.600 2 0.600 6 0.600 4 0.600"/><path d="M27 66.5H172" stroke="#9a9a9a" stroke-width="0.7" stroke-dasharray="3 0.600 5 0.600 2 0.600 6 0.600 4 0.600"/></svg>
  <svg class="abs" style="left:171.5px;top:676.5px" width="11" height="17" viewBox="0 0 11 17"><path d="M0.700 0.700V13.200L3.600 10.500 5.800 15.600 7.800 14.700 5.600 9.800H9.600Z" fill="#fff" stroke="#222" stroke-width="0.900"/></svg>
  <!-- SLIDE -->
  <div class="abs" style="left:1355.5px;top:129.5px;width:12.500px;height:585px;background:#e0e0e0"></div>
  <div class="abs" style="left:1355.5px;top:132px;width:12.500px;height:12px;background:#fff"></div>
  <svg class="abs" style="left:1358.5px;top:135.5px" width="7" height="5" viewBox="0 0 7 5"><path d="M0 4.500L3.500 0.500 7 4.500Z" fill="#666"/></svg>
  <div class="abs" style="left:1355.5px;top:308px;width:12.500px;height:14.500px;background:#fff;border:1px solid #c4c4c4"></div>
  <svg class="abs" style="left:302px;top:139px;box-shadow:0 0 0 1px #cfcfcf" width="1000" height="561" preserveAspectRatio="none"><use href="#slide12"/></svg>
  <div class="abs" id="status">
    <div style="position:absolute;top:4px;color:#555;font-size:9.500px;line-height:11px;white-space:nowrap;letter-spacing:-0.25px;left:4.5px">Слайд 12 из 34</div>
    <svg class="abs" style="left:81px;top:3px" width="14" height="12" viewBox="0 0 14 12" fill="none" stroke="#666" stroke-width="0.900"><path d="M0.500 1.500H5.500V10.500H0.500zM5.500 1.500H10.500V4M5.500 10.500H10.500V8"/><path d="M8 7.500L12.500 2.500 13.500 3.500 9 8.500 7.600 8.900Z"/></svg>
    <div style="position:absolute;top:4px;color:#555;font-size:9.500px;line-height:11px;white-space:nowrap;letter-spacing:-0.25px;left:106.9px">английский (США)</div>
    <svg class="abs" style="left:937px;top:4px" width="10" height="10" viewBox="0 0 10 10"><path d="M5 0.500L7.500 3.500H2.500Z" fill="#666"/><path d="M1 5H9M1 7H9M1 9H9" stroke="#666" stroke-width="0.900"/></svg>
    <div style="position:absolute;top:4px;color:#555;font-size:9.500px;line-height:11px;white-space:nowrap;letter-spacing:-0.25px;left:951.4px">Заметки</div>
    <svg class="abs" style="left:1000.5px;top:4px" width="11" height="11" viewBox="0 0 11 11"><path d="M0.500 0.500H10.500V7.500H5.500L3 10.500V7.500H0.500Z" fill="#666"/></svg>
    <div style="position:absolute;top:4px;color:#555;font-size:9.500px;line-height:11px;white-space:nowrap;letter-spacing:-0.25px;left:1015.7px">Примечания</div>
    <div class="abs" style="left:1083px;top:0;width:28.500px;height:19px;background:#c6c6c6"></div>
    <svg class="abs" style="left:1091.5px;top:4.500px" width="11" height="10" viewBox="0 0 11 10" fill="none" stroke="#555" stroke-width="0.900"><rect x="0.500" y="0.500" width="10" height="8.500"/><path d="M3 0.500V9M3 5.500H10.500"/><rect x="5" y="2.200" width="3.500" height="1.600" fill="#555" stroke="none"/></svg>
    <svg class="abs" style="left:1120.5px;top:4.500px" width="11" height="10" viewBox="0 0 11 10" fill="none" stroke="#666" stroke-width="0.900"><rect x="0.500" y="0.500" width="3.800" height="3"/><rect x="6.500" y="0.500" width="3.800" height="3"/><rect x="0.500" y="6" width="3.800" height="3"/><rect x="6.500" y="6" width="3.800" height="3"/></svg>
    <svg class="abs" style="left:1149.5px;top:4.500px" width="11" height="10" viewBox="0 0 11 10" fill="none" stroke="#666" stroke-width="0.900"><path d="M5.500 1.500V9M0.500 0.800H4.500L5.500 1.800 6.500 0.800H10.500V8H6.500L5.500 9 4.500 8H0.500Z"/><path d="M2 3H4M2 5H4M7 3H9M7 5H9" stroke-width="0.700"/></svg>
    <svg class="abs" style="left:1178.5px;top:4.500px" width="11" height="10" viewBox="0 0 11 10" fill="none" stroke="#666" stroke-width="0.900"><path d="M0.500 0.800H10.500M1.500 0.800V5.500H9.500V0.800M5.500 5.500V8.500M3.500 9.300H7.500"/></svg>
    <div class="abs" style="left:1203px;top:9px;width:7px;height:1.500px;background:#555"></div>
    <div class="abs" style="left:1213px;top:9.500px;width:88px;height:1px;background:#9a9a9a"></div>
    <div class="abs" style="left:1256.5px;top:6.500px;width:1px;height:7px;background:#9a9a9a"></div>
    <div class="abs" style="left:1250.5px;top:4.500px;width:3px;height:10.500px;background:#555"></div>
    <div class="abs" style="left:1305.5px;top:9px;width:7.500px;height:1.500px;background:#555"></div><div class="abs" style="left:1308.5px;top:6px;width:1.500px;height:7.500px;background:#555"></div>
    <div style="position:absolute;top:4px;color:#555;font-size:9.500px;line-height:11px;white-space:nowrap;letter-spacing:-0.25px;left:1324px">88%</div>
    <svg class="abs" style="left:1352.5px;top:4px" width="11" height="11" viewBox="0 0 11 11" fill="none" stroke="#666" stroke-width="0.900"><rect x="0.500" y="0.500" width="10" height="10"/><path d="M2.500 4.500V2.500H4.500M6.500 2.500H8.500V4.500M8.500 6.500V8.500H6.500M4.500 8.500H2.500V6.500"/></svg>
  </div>
</div>

<!-- CAM -->
<svg class="abs" style="left:1574px;top:637px;border-radius:12px;box-shadow:0 1px 3px rgba(0,0,0,.3),0 3px 8px rgba(0,0,0,.18)" width="292" height="165" viewBox="0 0 292 165">
 <defs>
  <linearGradient id="wall" x1="0" y1="0" x2="1" y2="0"><stop offset="0" stop-color="#cbc8c3"/><stop offset="0.25" stop-color="#d3d0cb"/><stop offset="0.55" stop-color="#dad5cf"/><stop offset="1" stop-color="#dfd7ce"/></linearGradient>
  <radialGradient id="vig" gradientUnits="userSpaceOnUse" cx="150" cy="110" r="210"><stop offset="0.6" stop-color="#6a645e" stop-opacity="0"/><stop offset="1" stop-color="#6a645e" stop-opacity="0.30"/></radialGradient><filter id="b1" x="-20%" y="-20%" width="140%" height="140%"><feGaussianBlur stdDeviation="1.200"/></filter>
  <filter id="b2" x="-20%" y="-20%" width="140%" height="140%"><feGaussianBlur stdDeviation="2.500"/></filter>
  <filter id="b05" x="-20%" y="-20%" width="140%" height="140%"><feGaussianBlur stdDeviation="0.600"/></filter>
  <clipPath id="camclip"><rect width="292" height="165" rx="12"/></clipPath>
 </defs>
 <g clip-path="url(#camclip)">
 <rect width="292" height="165" fill="url(#wall)"/><rect width="292" height="165" fill="url(#vig)"/>
 <rect y="138" width="292" height="27" fill="#d8d3cd"/>
 <rect y="126.500" width="292" height="11" fill="#e6e1db"/><rect y="132.500" width="292" height="5" fill="#eeebe7"/>
 <rect y="137.500" width="292" height="1.500" fill="#b9b1aa" opacity="0.700"/>
 <rect x="244" y="139" width="5" height="26" fill="#f1eeea"/><rect x="284" y="139" width="4" height="26" fill="#f1eeea"/>
 <rect x="1" y="139" width="4" height="26" fill="#eceae6"/>
 <!-- left plants -->
 <g filter="url(#b05)">
  <g fill="#3d6f2c"><circle cx="8" cy="108" r="5"/><circle cx="17" cy="103" r="5.500"/><circle cx="25" cy="109" r="5"/><circle cx="12" cy="116" r="5.500"/><circle cx="22" cy="118" r="5"/><circle cx="29" cy="120" r="4"/><circle cx="5" cy="120" r="4"/><circle cx="18" cy="111" r="4" fill="#7aa850"/><circle cx="9" cy="113" r="2.500" fill="#8fb860"/><circle cx="24" cy="114" r="2.500" fill="#86b058"/><circle cx="14" cy="121" r="2.500" fill="#9cc070"/><circle cx="10" cy="124" r="3.500"/><circle cx="26" cy="126" r="3"/></g>
  <ellipse cx="11" cy="129" rx="5" ry="4" fill="#f4f1ee"/>
  <g stroke="#4a7a35" stroke-width="1" fill="none"><path d="M50 115Q49 105 46 96M50 115Q54 106 60 100M50 115Q52 108 70 106"/></g>
  <g fill="#47803a"><circle cx="46" cy="96" r="2.500"/><circle cx="49" cy="102" r="2.500"/><circle cx="43" cy="104" r="2.200"/><circle cx="56" cy="103" r="2.500"/><circle cx="61" cy="99" r="2.200"/><circle cx="64" cy="106" r="2.200"/><circle cx="70" cy="105" r="2.200"/><circle cx="53" cy="109" r="2.200"/><circle cx="52" cy="93" r="2"/></g>
  <ellipse cx="50" cy="123.500" rx="9" ry="9.500" fill="#9f9a95"/><path d="M44 117V130M47 115.500V132M50 114.500V133M53 115.500V132M56 117V130" stroke="#e2deda" stroke-width="1.100"/>
  <rect x="69" y="128.500" width="13" height="4.500" fill="#f7f5f2" stroke="#bdb6b0" stroke-width="0.500"/><rect x="80" y="130" width="14" height="3" fill="#ddd6cf"/>
  <!-- right plants -->
  <g fill="#47873a"><circle cx="212" cy="120" r="3.500"/><circle cx="218" cy="117" r="4"/><circle cx="224" cy="121" r="3.500"/><circle cx="229" cy="119" r="3"/><circle cx="215" cy="124" r="3"/><circle cx="222" cy="125" r="3"/><circle cx="209" cy="117" r="2.500"/></g>
  <path d="M210 126H227Q226 133.500 218.500 133.500T210 126Z" fill="#f3f0ec"/>
  <g fill="#3f8033"><circle cx="235" cy="110" r="4"/><circle cx="242" cy="106" r="4"/><circle cx="248" cy="112" r="4"/><circle cx="239" cy="116" r="4"/><circle cx="246" cy="118" r="3.500"/><circle cx="231" cy="115" r="3"/><circle cx="252" cy="117" r="2.500"/></g>
  <path d="M233 122.500H246.500V133Q246.500 135 244.500 135H235Q233 135 233 133Z" fill="#e9e4df"/>
 </g>
 <!-- person -->
 <g filter="url(#b1)">
  <path d="M34 165Q62 146 104 137Q122 133 141 138Q166 132 198 142Q226 150 240 165Z" fill="#1f232c"/>
  <g opacity="0.850"><path d="M66 165l20-17M94 165l14-20M170 165l-8-22M198 165l-16-18" stroke="#46526c" stroke-width="3"/><path d="M82 165l12-14M184 165l-10-16M120 165l2-14" stroke="#8a3444" stroke-width="2.500"/><path d="M152 165l8-24M108 150l8 15" stroke="#3a62a8" stroke-width="2.500"/><path d="M130 150l-6 15M176 148l6 17" stroke="#c8ccd4" stroke-width="1.200"/></g>
  <path d="M116 122H170V142Q143 160 116 142Z" fill="#a38a79"/>
  <path d="M101 88Q92 50 114 28Q138 12 165 22Q187 40 185 70Q184 80 181 86L176 60H112L106 92Z" fill="#1b191b"/>
  <ellipse cx="141" cy="92" rx="37.500" ry="48" fill="#a8907f"/>
  <ellipse cx="139" cy="104" rx="27" ry="30" fill="#b59f8f" opacity="0.700"/>
  <path d="M105 96Q104 80 110 104" fill="none"/>
  <ellipse cx="110" cy="100" rx="5" ry="22" fill="#c6b6aa" opacity="0.600"/>
  <ellipse cx="145" cy="60" rx="28" ry="14" fill="#937b6b" opacity="0.400"/>
  <path d="M103 92L108.400 76.800Q112 62 120.400 52.700Q130 43.500 142.800 42.400Q165 46 175.500 64.800L179.800 80.300L180.500 90Q184 70 178 50Q166 28 141 26Q114 28 104 52Q99 70 103 92Z" fill="#1b191b"/>
 </g>
 <g filter="url(#b05)">
  <ellipse cx="127.300" cy="79.800" rx="5.500" ry="2.700" fill="#3b2c28"/><ellipse cx="162.600" cy="80.300" rx="5.500" ry="2.700" fill="#3b2c28"/>
  <path d="M117 72.500Q126 67.500 136 71.500" stroke="#4e3a34" stroke-width="1.700" fill="none"/><path d="M153 71.500Q163 67.500 173 73.500" stroke="#4e3a34" stroke-width="1.700" fill="none"/>
  <ellipse cx="127" cy="86.500" rx="7.500" ry="2.600" fill="#8c7565" opacity="0.600"/><ellipse cx="163" cy="87" rx="7.500" ry="2.600" fill="#8c7565" opacity="0.600"/>
  <path d="M136 100.500Q142 104.500 149 100.500" stroke="#826555" stroke-width="1.800" fill="none"/>
  <path d="M129 117Q141 113.500 153 117Q141 122.500 129 117Z" fill="#9a4a52"/>
  <path d="M131 128Q141 132 151 128" stroke="#937a6a" stroke-width="1.500" fill="none" opacity="0.700"/>
 </g>
 </g>
 <circle cx="267" cy="24.500" r="15" fill="#3c4043" fill-opacity="0.900"/>
 <g transform="translate(257.500 15) scale(0.790)"><path fill="#fff" d="M10.800 4.900c0-.66.540-1.200 1.200-1.200s1.200.54 1.200 1.200l-.010 3.910L15 10.600V5c0-1.660-1.340-3-3-3-1.540 0-2.790 1.160-2.960 2.650l1.760 1.760V4.900zM19 11h-1.700c0 .58-.1 1.130-.270 1.640l1.270 1.270c.44-.88.7-1.870.7-2.910zM4.410 2.860L3 4.270l6 6V11c0 1.660 1.340 3 3 3 .23 0 .44-.030.65-.080l1.660 1.660c-.71.33-1.500.52-2.310.52-2.760 0-5.300-2.100-5.300-5.100H5c0 3.410 2.720 6.230 6 6.720V21h2v-3.280c.91-.13 1.770-.45 2.550-.9l4.200 4.180 1.410-1.410L4.410 2.860z"/></g>
 <text x="12" y="149.700" font-family="Liberation Sans" font-weight="bold" font-size="14.800" fill="#fff" style="text-shadow:0 0 3px rgba(0,0,0,.55),0 1px 2px rgba(0,0,0,.5)">Ірина Юріївна Слюсаренко</text>
</svg>

<!-- BOTTOM -->
<div class="t" style="left:26px;top:862px;color:#fff;font-size:18.700px;line-height:20px;letter-spacing:0.5px;-webkit-text-stroke:0.7px #fff">11:40</div>
<div class="abs" style="left:88.500px;top:862px;width:1px;height:19.500px;background:#9aa0a6"></div>
<div class="t" style="left:104px;top:861.500px;color:#fff;font-size:19.300px;line-height:20px;letter-spacing:1.55px;-webkit-text-stroke:0.7px #fff">bam-pjcp-rio</div>
<div class="abs" style="left:599px;top:842px;width:110px;height:60px;border-radius:15px;background:#601410"></div>
<div class="abs" style="left:649px;top:842px;width:60px;height:60px;border-radius:15px;background:#f9dedc"></div>
<svg class="abs" style="left:615px;top:860.500px" width="26" height="26" viewBox="0 0 24 24"><path fill="#f9dedc" d="M12 8l-6 6 1.410 1.410L12 10.830l4.590 4.580L18 14z"/></svg>
<svg class="abs" style="left:664.500px;top:857.500px" width="30" height="30" viewBox="0 0 24 24"><path fill="#601410" d="M10.800 4.900c0-.660.540-1.200 1.200-1.200s1.200.540 1.200 1.200l-.010 3.910L15 10.600V5c0-1.660-1.340-3-3-3-1.540 0-2.790 1.160-2.960 2.650l1.760 1.760V4.900zM19 11h-1.700c0 .580-.100 1.130-.270 1.640l1.270 1.270c.440-.880.700-1.870.700-2.910zM4.410 2.860L3 4.270l6 6V11c0 1.660 1.340 3 3 3 .230 0 .440-.030.650-.080l1.660 1.660c-.710.330-1.500.520-2.310.520-2.760 0-5.300-2.100-5.300-5.100H5c0 3.410 2.720 6.230 6 6.720V21h2v-3.280c.910-.130 1.770-.450 2.550-.900l4.200 4.180 1.410-1.410L4.410 2.860z"/></svg>
<div class="btn" style="left:719px;width:110px;background:#282a2c"></div>
<div class="btn" style="left:769px;width:60px"></div>
<svg class="abs" style="left:735px;top:860.500px" width="26" height="26" viewBox="0 0 24 24"><path fill="#8e918f" d="M12 8l-6 6 1.410 1.410L12 10.830l4.590 4.580L18 14z"/></svg>
<svg class="abs" style="left:785px;top:861px" width="28" height="22" viewBox="0 0 28 22"><rect x="2.400" y="2.600" width="16.200" height="16.600" rx="1.300" fill="none" stroke="#e3e3e3" stroke-width="2.600"/><path d="M19.600 8.400L26.900 4.300V17.700L19.600 13.600Z" fill="#e3e3e3"/></svg>
<div class="btn" style="left:839px;width:70px"></div>
<svg class="abs" style="left:858px;top:859px" width="32" height="26" viewBox="0 0 32 26" fill="none" stroke="#e3e3e3"><rect x="4.600" y="3" width="22.400" height="16.400" rx="1" stroke-width="2.800"/><path d="M1.600 23.300H30.200" stroke-width="2.400"/><path d="M15.700 16.400V11" stroke-width="3"/><path d="M10.300 12L15.700 6.600 21.100 12z" fill="#e3e3e3" stroke="none"/></svg>
<div class="btn" style="left:919px;width:70px"></div>
<svg class="abs" style="left:940px;top:858px" width="28" height="28" viewBox="0 0 28 28"><circle cx="14" cy="14" r="11.800" fill="none" stroke="#e3e3e3" stroke-width="2.400"/><circle cx="9.800" cy="10.700" r="1.900" fill="#e3e3e3"/><circle cx="18.200" cy="10.700" r="1.900" fill="#e3e3e3"/><path d="M7.200 15.300H20.800Q19.800 21.600 14 21.600T7.200 15.300Z" fill="#e3e3e3"/></svg>
<div class="btn" style="left:999px;width:70px"></div>
<svg class="abs" style="left:1020px;top:860px" width="28" height="24" viewBox="0 0 28 24" fill="none" stroke="#e3e3e3"><rect x="3.400" y="3.300" width="20.600" height="17.300" rx="1.200" stroke-width="2.800"/><path d="M13.400 9.900H6.900V15.100H13.400" stroke-width="2"/><path d="M22.600 9.900H16.100V15.100H22.600" stroke-width="2"/></svg>
<div class="btn" style="left:1079px;width:70px"></div>
<svg class="abs" style="left:1098px;top:856px" width="30" height="32" viewBox="0 0 30 32" fill="none" stroke="#e3e3e3" stroke-width="2.800" stroke-linecap="round" stroke-linejoin="round"><path d="M11.700 7.200V18.500"/><path d="M16.200 3.200V15.800"/><path d="M20.700 4.400V15.800"/><path d="M26.200 7.600V20.500C26.200 25.800 22 28.900 16.800 28.900C12.200 28.900 9.400 26.600 7.600 23L3.400 16.400C5 15.200 6.600 15.600 7.600 16.800L11.700 21.500"/></svg>
<div class="btn" style="left:1159.500px;width:44.500px"></div>
<svg class="abs" style="left:1176px;top:859px" width="12" height="26" viewBox="0 0 12 26" fill="#e3e3e3"><circle cx="6" cy="5.200" r="2.500"/><circle cx="6" cy="13" r="2.500"/><circle cx="6" cy="20.800" r="2.500"/></svg>
<div class="btn" style="left:1214px;width:90px;background:#dc362e"></div>
<svg class="abs" style="left:1244.500px;top:859.300px" width="29" height="29" viewBox="0 0 24 24"><path fill="#fff" fill-rule="evenodd" d="M18.590 10.520c1.050.510 2.040 1.150 2.960 1.910l-1.070 1.070c-.580-.470-1.210-.890-1.880-1.270v-1.710m-13.200.020v1.700c-.650.370-1.280.790-1.870 1.270l-1.070-1.070c.910-.750 1.900-1.390 2.940-1.900M12 7C7.460 7 3.340 8.780.290 11.670c-.180.180-.290.430-.290.710s.110.530.290.700l2.480 2.480c.180.180.430.290.710.290.270 0 .520-.100.700-.280.790-.730 1.680-1.360 2.660-1.850.330-.160.560-.510.560-.900v-3.100C8.850 9.250 10.400 9 12 9s3.150.250 4.590.730v3.100c0 .400.230.740.560.900.980.490 1.880 1.110 2.670 1.850.180.170.430.280.700.280.280 0 .530-.110.710-.290l2.480-2.480c.180-.180.290-.430.290-.710s-.110-.530-.290-.710C20.660 8.780 16.540 7 12 7z"/></svg>
<svg class="abs" style="left:1665.300px;top:856.300px" width="31.500" height="31.500" viewBox="0 0 24 24"><path fill="#fff" d="M11 7h2v2h-2zm0 4h2v6h-2zm1-9C6.480 2 2 6.480 2 12s4.480 10 10 10 10-4.480 10-10S17.520 2 12 2zm0 18c-4.410 0-8-3.590-8-8s3.590-8 8-8 8 3.590 8 8-3.590 8-8 8z"/></svg>
<svg class="abs" style="left:1724.700px;top:855.500px" width="33" height="33" viewBox="0 0 24 24"><path fill="#fff" d="M9 13.750c-2.340 0-7 1.170-7 3.500V19h14v-1.750c0-2.330-4.660-3.500-7-3.500zM4.340 17c.840-.580 2.870-1.250 4.660-1.250s3.820.670 4.660 1.250H4.340zM9 12c1.930 0 3.500-1.570 3.500-3.500S10.930 5 9 5 5.500 6.570 5.500 8.500 7.070 12 9 12zm0-5c.830 0 1.500.670 1.500 1.500S9.830 10 9 10s-1.500-.670-1.500-1.500S8.170 7 9 7zm7.040 6.810c1.160.840 1.960 1.960 1.960 3.440V19h4v-1.750c0-2.020-3.500-3.170-5.960-3.440zM15 12c1.930 0 3.500-1.570 3.500-3.500S16.930 5 15 5c-.540 0-1.040.130-1.500.350.630.890 1 1.980 1 3.150s-.370 2.260-1 3.150c.460.220.960.350 1.500.350z"/></svg>
<svg class="abs" style="left:1785.800px;top:857.500px" width="30.500" height="30.500" viewBox="0 0 24 24"><path fill="#fff" d="M4 4h16v12H5.170L4 17.170V4m0-2c-1.100 0-1.990.900-1.990 2L2 22l4-4h14c1.100 0 2-.900 2-2V4c0-1.100-.900-2-2-2H4zm2 10h8v2H6v-2zm0-3h12v2H6V9zm0-3h12v2H6V6z"/></svg>
<svg class="abs" style="left:1850px;top:861px" width="22" height="22" viewBox="0 0 22 22" fill="#fff"><circle cx="3.55" cy="3.60" r="3"/><circle cx="3.55" cy="11.05" r="3"/><circle cx="3.55" cy="18.50" r="3"/><circle cx="11.00" cy="3.60" r="3"/><circle cx="11.00" cy="11.05" r="3"/><circle cx="11.00" cy="18.50" r="3"/><circle cx="18.45" cy="3.60" r="3"/><circle cx="18.45" cy="11.05" r="3"/><circle cx="18.45" cy="18.50" r="3"/></svg>
<div class="abs" style="left:1742px;top:831px;width:33px;height:25px;border-radius:12.500px;background:#5f6368;color:#fff;font-size:13px;font-weight:bold;text-align:center;line-height:25px;letter-spacing:-0.3px">17</div>
<svg class="abs" style="left:26px;top:29px" width="25" height="25" viewBox="0 0 25 25"><g fill="#2a2210"><path d="M2.500 5.500L20 23H2.500Z"/><path d="M9.500 3.500H14.500L16.500 5.500H22.500V19.500L9.500 6.500Z"/></g><g fill="#fbbc04"><rect x="5" y="12.500" width="2" height="2"/><rect x="5" y="16.500" width="2" height="2"/><rect x="9" y="16.500" width="2" height="2"/><rect x="5" y="20.300" width="2" height="1.500"/><rect x="9" y="20.300" width="2" height="1.500"/><rect x="13" y="20.300" width="2" height="1.500"/><circle cx="18" cy="11" r="1.200"/></g><path d="M2 2.500L23 23.500" stroke="#fbbc04" stroke-width="4"/><path d="M1.500 3L22 23.500" stroke="#2a2210" stroke-width="2"/></svg>
</body>
</html>
